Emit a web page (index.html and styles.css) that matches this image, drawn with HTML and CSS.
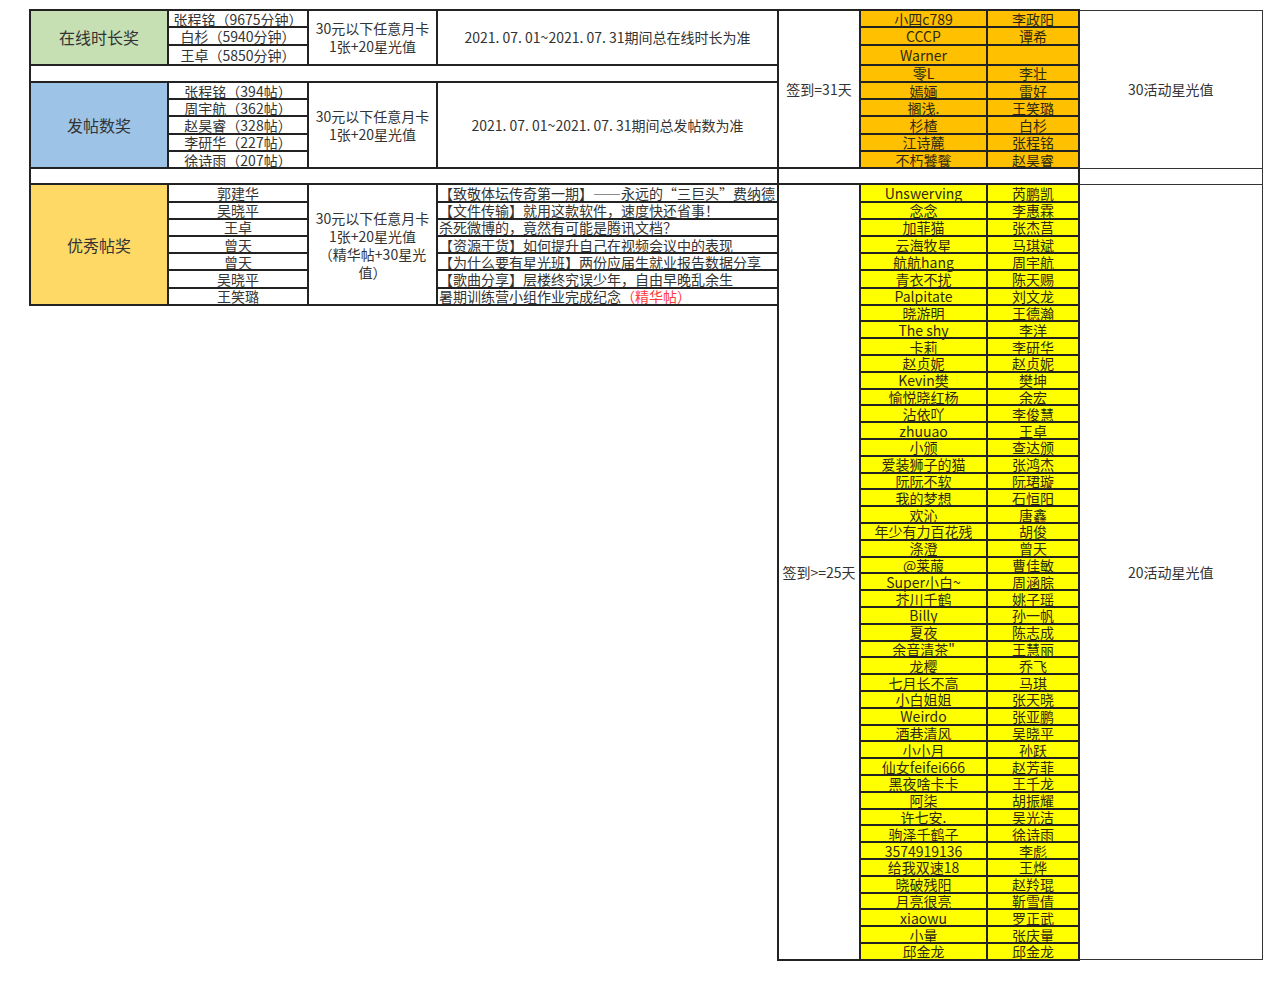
FILE: index.html
```html
<!DOCTYPE html>
<html lang="zh-CN">
<head>
<meta charset="utf-8">
<title>七月活动获奖名单</title>
<link rel="stylesheet" href="styles.css">
</head>
<body>
<table class="sheet">
  <colgroup>
    <col class="c-a"><col class="c-b"><col class="c-c"><col class="c-d">
    <col class="c-e"><col class="c-f"><col class="c-g"><col class="c-h">
  </colgroup>
  <tbody>
    <tr class="rt">
      <td class="award green" rowspan="3">在线时长奖</td>
      <td class="name">张程铭（9675分钟）</td>
      <td class="prize" rowspan="3">30元以下任意月卡<br>1张+20星光值</td>
      <td class="rule" rowspan="3">2021. 07. 01~2021. 07. 31期间总在线时长为准</td>
      <td class="sign" rowspan="9">签到=31天</td>
      <td class="yn orange">小四c789</td>
      <td class="yn orange">李政阳</td>
      <td class="reward" rowspan="9">30活动星光值</td>
    </tr>
    <tr class="rt">
      <td class="name">白杉（5940分钟）</td>
      <td class="yn orange">CCCP</td>
      <td class="yn orange">谭希</td>
    </tr>
    <tr class="rw">
      <td class="name">王卓（5850分钟）</td>
      <td class="yn orange">Warner</td>
      <td class="yn orange"></td>
    </tr>
    <tr class="rt">
      <td class="blank" colspan="4"></td>
      <td class="yn orange">零L</td>
      <td class="yn orange">李壮</td>
    </tr>
    <tr class="rt">
      <td class="award blue" rowspan="5">发帖数奖</td>
      <td class="name">张程铭（394帖）</td>
      <td class="prize" rowspan="5">30元以下任意月卡<br>1张+20星光值</td>
      <td class="rule" rowspan="5">2021. 07. 01~2021. 07. 31期间总发帖数为准</td>
      <td class="yn orange">嫣婳</td>
      <td class="yn orange">雷好</td>
    </tr>
    <tr class="rt">
      <td class="name">周宇航（362帖）</td>
      <td class="yn orange">搁浅.</td>
      <td class="yn orange">王笑璐</td>
    </tr>
    <tr class="rt">
      <td class="name">赵昊睿（328帖）</td>
      <td class="yn orange">杉楂</td>
      <td class="yn orange">白杉</td>
    </tr>
    <tr class="rt">
      <td class="name">李研华（227帖）</td>
      <td class="yn orange">江诗麓</td>
      <td class="yn orange">张程铭</td>
    </tr>
    <tr class="rt">
      <td class="name">徐诗雨（207帖）</td>
      <td class="yn orange">不朽饕餮</td>
      <td class="yn orange">赵昊睿</td>
    </tr>
    <tr class="rs">
      <td class="blank" colspan="4"></td>
      <td class="blank" colspan="3"></td>
      <td class="reward"></td>
    </tr>
    <tr class="rp">
      <td class="award gold" rowspan="7">优秀帖奖</td>
      <td class="name">郭建华</td>
      <td class="prize" rowspan="7">30元以下任意月卡<br>1张+20星光值<br>（精华帖+30星光<br>值）</td>
      <td class="post">【致敬体坛传奇第一期】——永远的“三巨头”费纳德</td>
      <td class="sign" rowspan="46">签到&gt;=25天</td>
      <td class="yn yellow">Unswerving</td>
      <td class="yn yellow">芮鹏凯</td>
      <td class="reward" rowspan="46">20活动星光值</td>
    </tr>
    <tr class="rp">
      <td class="name">吴晓平</td>
      <td class="post">【文件传输】就用这款软件，速度快还省事！</td>
      <td class="yn yellow">念念</td>
      <td class="yn yellow">李惠霖</td>
    </tr>
    <tr class="rp">
      <td class="name">王卓</td>
      <td class="post">杀死微博的，竟然有可能是腾讯文档？</td>
      <td class="yn yellow">加菲猫</td>
      <td class="yn yellow">张杰莒</td>
    </tr>
    <tr class="rp">
      <td class="name">曾天</td>
      <td class="post">【资源干货】如何提升自己在视频会议中的表现</td>
      <td class="yn yellow">云海牧星</td>
      <td class="yn yellow">马琪斌</td>
    </tr>
    <tr class="rp">
      <td class="name">曾天</td>
      <td class="post">【为什么要有星光班】两份应届生就业报告数据分享</td>
      <td class="yn yellow">航航hang</td>
      <td class="yn yellow">周宇航</td>
    </tr>
    <tr class="rp">
      <td class="name">吴晓平</td>
      <td class="post">【歌曲分享】层楼终究误少年，自由早晚乱余生</td>
      <td class="yn yellow">青衣不扰</td>
      <td class="yn yellow">陈天赐</td>
    </tr>
    <tr class="rp">
      <td class="name">王笑璐</td>
      <td class="post">暑期训练营小组作业完成纪念<span class="essence">（精华帖）</span></td>
      <td class="yn yellow">Palpitate</td>
      <td class="yn yellow">刘文龙</td>
    </tr>
    <tr class="rl">
      <td class="empty" colspan="4" rowspan="39"></td>
      <td class="yn yellow">晓游明</td>
      <td class="yn yellow">王德瀚</td>
    </tr>
    <tr class="rl"><td class="yn yellow">The shy</td><td class="yn yellow">李洋</td></tr>
    <tr class="rl"><td class="yn yellow">卡莉</td><td class="yn yellow">李研华</td></tr>
    <tr class="rl"><td class="yn yellow">赵贞妮</td><td class="yn yellow">赵贞妮</td></tr>
    <tr class="rl"><td class="yn yellow">Kevin樊</td><td class="yn yellow">樊坤</td></tr>
    <tr class="rl"><td class="yn yellow">愉悦晓红杨</td><td class="yn yellow">余宏</td></tr>
    <tr class="rl"><td class="yn yellow">沾依吖</td><td class="yn yellow">李俊慧</td></tr>
    <tr class="rl"><td class="yn yellow">zhuuao</td><td class="yn yellow">王卓</td></tr>
    <tr class="rl"><td class="yn yellow">小颁</td><td class="yn yellow">查达颁</td></tr>
    <tr class="rl"><td class="yn yellow">爱装狮子的猫</td><td class="yn yellow">张鸿杰</td></tr>
    <tr class="rl"><td class="yn yellow">阮阮不软</td><td class="yn yellow">阮珺璇</td></tr>
    <tr class="rl"><td class="yn yellow">我的梦想</td><td class="yn yellow">石恒阳</td></tr>
    <tr class="rl"><td class="yn yellow">欢沁</td><td class="yn yellow">唐鑫</td></tr>
    <tr class="rl"><td class="yn yellow">年少有力百花残</td><td class="yn yellow">胡俊</td></tr>
    <tr class="rl"><td class="yn yellow">涤澄</td><td class="yn yellow">曾天</td></tr>
    <tr class="rl"><td class="yn yellow">@莱菔</td><td class="yn yellow">曹佳敏</td></tr>
    <tr class="rl"><td class="yn yellow">Super小白~</td><td class="yn yellow">周涵腙</td></tr>
    <tr class="rl"><td class="yn yellow">芥川千鹤</td><td class="yn yellow">姚子瑶</td></tr>
    <tr class="rl"><td class="yn yellow">Billy</td><td class="yn yellow">孙一帆</td></tr>
    <tr class="rl"><td class="yn yellow">夏夜</td><td class="yn yellow">陈志成</td></tr>
    <tr class="rl"><td class="yn yellow">余音清茶"</td><td class="yn yellow">王慧丽</td></tr>
    <tr class="rl"><td class="yn yellow">龙樱</td><td class="yn yellow">乔飞</td></tr>
    <tr class="rl"><td class="yn yellow">七月长不高</td><td class="yn yellow">马琪</td></tr>
    <tr class="rl"><td class="yn yellow">小白姐姐</td><td class="yn yellow">张天晓</td></tr>
    <tr class="rl"><td class="yn yellow">Weirdo</td><td class="yn yellow">张亚鹏</td></tr>
    <tr class="rl"><td class="yn yellow">酒巷清风</td><td class="yn yellow">吴晓平</td></tr>
    <tr class="rl"><td class="yn yellow">小小月</td><td class="yn yellow">孙跃</td></tr>
    <tr class="rl"><td class="yn yellow">仙女feifei666</td><td class="yn yellow">赵芳菲</td></tr>
    <tr class="rl"><td class="yn yellow">黑夜啥卡卡</td><td class="yn yellow">王千龙</td></tr>
    <tr class="rl"><td class="yn yellow">阿柒</td><td class="yn yellow">胡振耀</td></tr>
    <tr class="rl"><td class="yn yellow">许七安.</td><td class="yn yellow">吴光洁</td></tr>
    <tr class="rl"><td class="yn yellow">驹泽千鹤子</td><td class="yn yellow">徐诗雨</td></tr>
    <tr class="rl"><td class="yn yellow">3574919136</td><td class="yn yellow">李彪</td></tr>
    <tr class="rl"><td class="yn yellow">给我双速18</td><td class="yn yellow">王烨</td></tr>
    <tr class="rl"><td class="yn yellow">晓破残阳</td><td class="yn yellow">赵羚琨</td></tr>
    <tr class="rl"><td class="yn yellow">月亮很亮</td><td class="yn yellow">靳雪倩</td></tr>
    <tr class="rl"><td class="yn yellow">xiaowu</td><td class="yn yellow">罗正武</td></tr>
    <tr class="rl"><td class="yn yellow">小量</td><td class="yn yellow">张庆量</td></tr>
    <tr class="rl"><td class="yn yellow">邱金龙</td><td class="yn yellow">邱金龙</td></tr>
  </tbody>
</table>
</body>
</html>
```

FILE: styles.css
```css
html, body {
  margin: 0;
  padding: 0;
  background: #ffffff;
}

body {
  font-family: "Noto Sans CJK SC", "Noto Sans", sans-serif;
  color: #333333;
}

.sheet {
  margin: 9px 0 0 29px;
  border-collapse: collapse;
  table-layout: fixed;
  width: 1232px;
  font-size: 14px;
  line-height: 14px;
}

.c-a { width: 138px; }
.c-b { width: 140px; }
.c-c { width: 129px; }
.c-d { width: 341px; }
.c-e { width: 82px; }
.c-f { width: 127px; }
.c-g { width: 92px; }
.c-h { width: 183px; }

.rt { height: 17.3px; }
.rw { height: 20px; }
.rs { height: 16px; }
.rp { height: 17.2px; }
.rl { height: 16.8px; }

.sheet td {
  padding: 0 2px;
  border: 2px solid #222222;
  text-align: center;
  vertical-align: middle;
  white-space: nowrap;
}

.award {
  font-size: 16px;
}

.green { background: #c6e0b4; }
.blue { background: #9dc3e6; }
.gold { background: #ffd966; }

.prize {
  line-height: 18px;
}

.sheet td.post {
  text-align: left;
  padding-left: 1px;
  overflow: hidden;
}

.essence {
  color: #ff3b3b;
}

.yn {
  color: #2e2a10;
}

.orange { background: #ffc000; }
.yellow { background: #ffff00; }

.sheet td.reward {
  border: 1px solid #333333;
  border-left: 2px solid #222222;
}

.sheet td.empty {
  border: none;
}
```
